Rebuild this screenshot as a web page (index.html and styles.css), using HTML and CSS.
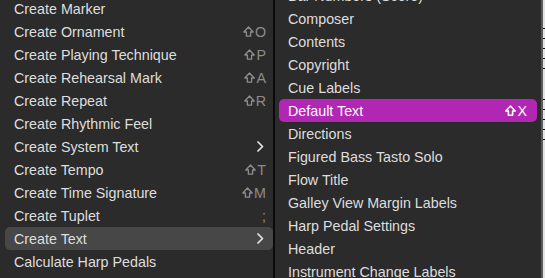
FILE: index.html
```html
<!DOCTYPE html>
<html>
<head>
<meta charset="utf-8">
<link rel="stylesheet" href="styles.css">
</head>
<body>
<div class="screen">
  <div class="menu menu-left">
    <ul class="items items-left">
      <li class="item"><span class="label">Create Marker</span></li>
      <li class="item"><span class="label">Create Ornament</span><span class="key"><svg class="shift" viewBox="0 0 11 11"><path d="M5.5 1 L10.2 6 H7.6 V10.2 H3.4 V6 H0.8 Z"/></svg>O</span></li>
      <li class="item"><span class="label">Create Playing Technique</span><span class="key"><svg class="shift" viewBox="0 0 11 11"><path d="M5.5 1 L10.2 6 H7.6 V10.2 H3.4 V6 H0.8 Z"/></svg>P</span></li>
      <li class="item"><span class="label">Create Rehearsal Mark</span><span class="key"><svg class="shift" viewBox="0 0 11 11"><path d="M5.5 1 L10.2 6 H7.6 V10.2 H3.4 V6 H0.8 Z"/></svg>A</span></li>
      <li class="item"><span class="label">Create Repeat</span><span class="key"><svg class="shift" viewBox="0 0 11 11"><path d="M5.5 1 L10.2 6 H7.6 V10.2 H3.4 V6 H0.8 Z"/></svg>R</span></li>
      <li class="item"><span class="label">Create Rhythmic Feel</span></li>
      <li class="item"><span class="label">Create System Text</span><svg class="chev" viewBox="0 0 7 11"><path d="M1 1 L5.5 5.5 L1 10"/></svg></li>
      <li class="item"><span class="label">Create Tempo</span><span class="key"><svg class="shift" viewBox="0 0 11 11"><path d="M5.5 1 L10.2 6 H7.6 V10.2 H3.4 V6 H0.8 Z"/></svg>T</span></li>
      <li class="item"><span class="label">Create Time Signature</span><span class="key"><svg class="shift" viewBox="0 0 11 11"><path d="M5.5 1 L10.2 6 H7.6 V10.2 H3.4 V6 H0.8 Z"/></svg>M</span></li>
      <li class="item"><span class="label">Create Tuplet</span><span class="key">;</span></li>
      <li class="item item-open"><span class="label">Create Text</span><svg class="chev" viewBox="0 0 7 11"><path d="M1 1 L5.5 5.5 L1 10"/></svg></li>
      <li class="item"><span class="label">Calculate Harp Pedals</span></li>
    </ul>
  </div>
  <div class="divider"></div>
  <div class="menu menu-right">
    <ul class="items items-right">
      <li class="item"><span class="label">Bar Numbers (Score)</span></li>
      <li class="item"><span class="label">Composer</span></li>
      <li class="item"><span class="label">Contents</span></li>
      <li class="item"><span class="label">Copyright</span></li>
      <li class="item"><span class="label">Cue Labels</span></li>
      <li class="item item-active"><span class="label">Default Text</span><span class="key"><svg class="shift" viewBox="0 0 11 11"><path d="M5.5 1 L10.2 6 H7.6 V10.2 H3.4 V6 H0.8 Z"/></svg>X</span></li>
      <li class="item"><span class="label">Directions</span></li>
      <li class="item"><span class="label">Figured Bass Tasto Solo</span></li>
      <li class="item"><span class="label">Flow Title</span></li>
      <li class="item"><span class="label">Galley View Margin Labels</span></li>
      <li class="item"><span class="label">Harp Pedal Settings</span></li>
      <li class="item"><span class="label">Header</span></li>
      <li class="item"><span class="label">Instrument Change Labels</span></li>
    </ul>
  </div>
  <div class="edge"></div>
  <div class="backdrop">
    <div class="staff s1"></div>
    <div class="staff s2"></div>
    <div class="staff s3"></div>
    <div class="staff s4"></div>
    <div class="staff s5"></div>
    <div class="staff s6"></div>
    <div class="staff s7"></div>
    <div class="staff s8"></div>
    <div class="staff s9"></div>
    <div class="staff s10"></div>
  </div>
</div>
</body>
</html>
```

FILE: styles.css
```css
html, body {
  margin: 0;
  padding: 0;
  background: #2b2b2b;
}
.screen {
  display: flex;
  width: 545px;
  height: 278px;
  overflow: hidden;
  font-family: "Liberation Sans", Arial, sans-serif;
  font-size: 14.3px;
  color: #dedede;
}
.menu {
  background: #2b2b2b;
  height: 278px;
  overflow: hidden;
  flex: none;
}
.menu-left {
  width: 268px;
  padding: 0 0 0 5px;
}
.divider {
  width: 2px;
  background: #0a0a0a;
  flex: none;
}
.menu-right {
  width: 258px;
  padding: 0 4px;
}
.edge {
  width: 2px;
  background: #5c5c5c;
  flex: none;
}
.backdrop {
  flex: 1;
  background: #e4e4e4;
  display: flex;
  flex-direction: column;
}
.staff {
  height: 1px;
  background: #111;
  margin-top: 9px;
}
.s1 { margin-top: 28px; }
.s6 { margin-top: 30px; }
.items {
  list-style: none;
  margin: 0;
  padding: 0;
}
.items-left { margin-top: -3px; }
.items-right { margin-top: -16px; }
.item {
  display: flex;
  align-items: center;
  height: 23px;
  border-radius: 5px;
  white-space: nowrap;
}
.items-left .item {
  padding: 0 7px 0 9px;
}
.items-right .item {
  padding: 0 10px 0 9px;
}
.label {
  flex: 1;
}
.key {
  display: flex;
  align-items: center;
  color: #8c8c8c;
}
.shift {
  width: 11px;
  height: 11px;
  margin-right: 1px;
  fill: none;
  stroke: currentColor;
  stroke-width: 1.3;
  stroke-linejoin: round;
}
.chev {
  width: 7px;
  height: 11px;
  margin-right: 2px;
  fill: none;
  stroke: #e6e6e6;
  stroke-width: 1.7;
  stroke-linecap: round;
  stroke-linejoin: round;
}
.item-open {
  background: #474747;
}
.item-active {
  background: #b226b4;
  color: #ffffff;
}
.item-active .key {
  color: #ffffff;
}
.item-active .shift {
  stroke-width: 1.6;
}
```
